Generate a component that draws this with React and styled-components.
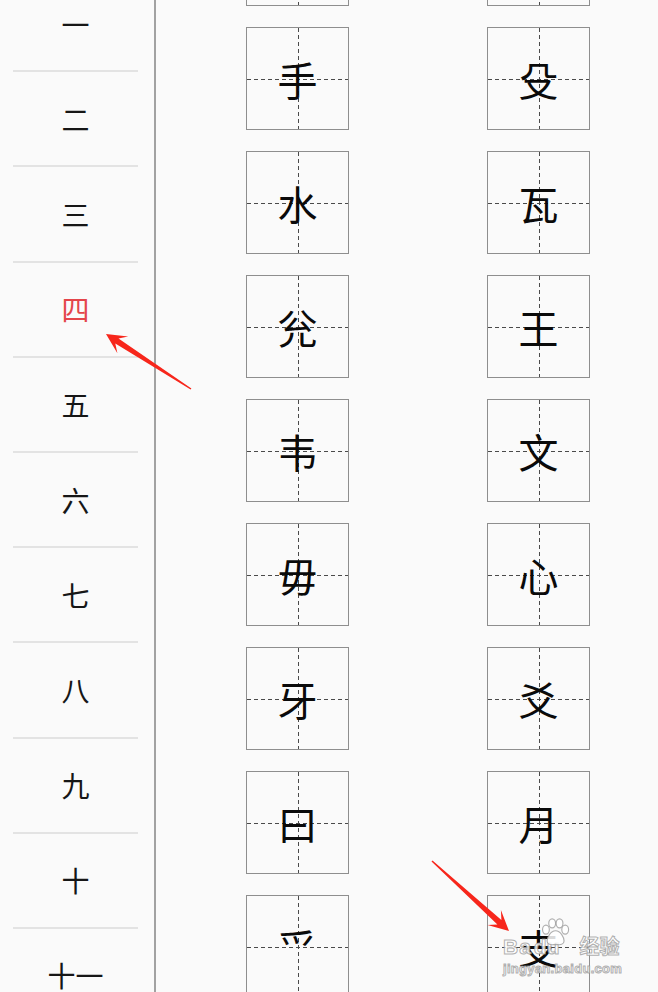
import React from "react";
import styled, { createGlobalStyle } from "styled-components";

const GlobalStyle = createGlobalStyle`
  html, body { margin: 0; padding: 0; background: #fafafa; }
  body { overflow: hidden; font-family: "Noto Sans CJK SC", "Noto Sans", sans-serif; }
`;

const Page = styled.div`
  position: relative;
  display: flex;
  width: 658px;
  height: 992px;
  overflow: hidden;
  background: #fafafa;
`;

const Sidebar = styled.nav`
  flex: 0 0 154px;
  border-right: 2px solid #a2a2a2;
  display: flex;
  flex-direction: column;
`;

const List = styled.ul`
  list-style: none;
  margin: -23px 0 0 0;
  padding: 0;
`;

const Item = styled.li`
  box-sizing: border-box;
  height: 95.2px;
  margin: 0 16px 0 13px;
  border-bottom: 2px solid ${(p) => (p.$last ? "transparent" : "#e3e3e3")};
  display: flex;
  align-items: center;
  justify-content: center;
  font-family: "Noto Sans CJK SC", sans-serif;
  font-size: 28px;
  line-height: 1;
  color: ${(p) => (p.$active ? "#e4454a" : "#161616")};
`;

const Main = styled.main`
  flex: 1;
  display: grid;
  grid-template-columns: 103px 103px;
  grid-auto-rows: 103px;
  column-gap: 138px;
  row-gap: 21px;
  align-content: start;
  padding-left: 90px;
  margin-top: -97px;
`;

const Cell = styled.div`
  position: relative;
  box-sizing: border-box;
  width: 103px;
  height: 103px;
  border: 1px solid #8e8e8e;
  display: flex;
  align-items: center;
  justify-content: center;
  font-family: "Noto Sans CJK SC", sans-serif;
  font-size: 40px;
  line-height: 1;
  color: #0a0a0a;

  &::before {
    content: "";
    position: absolute;
    left: 0;
    right: 0;
    top: 50%;
    height: 1px;
    background: repeating-linear-gradient(to right, #4a4a4a 0 4px, transparent 4px 7px);
  }
  &::after {
    content: "";
    position: absolute;
    top: 0;
    bottom: 0;
    left: 50%;
    width: 1px;
    background: repeating-linear-gradient(to bottom, #4a4a4a 0 4px, transparent 4px 7px);
  }
`;

const Glyph = styled.span`
  position: relative;
  z-index: 1;
`;

const Overlay = styled.svg`
  position: absolute;
  left: 0;
  top: 0;
  width: 658px;
  height: 992px;
  pointer-events: none;
  z-index: 5;
`;

const Watermark = styled.div`
  position: absolute;
  left: 503px;
  top: 936px;
  z-index: 6;
  pointer-events: none;
  display: flex;
  flex-direction: column;
  align-items: flex-start;
  gap: 5px;
`;

const MarkRow = styled.div`
  display: flex;
  align-items: flex-end;
`;

const MarkText = styled.span`
  font-family: "Liberation Sans", "Noto Sans CJK SC", sans-serif;
  font-weight: 700;
  font-size: ${(p) => p.$size}px;
  line-height: 1;
  color: rgba(255, 255, 255, 0.85);
  -webkit-text-stroke: 1px rgba(150, 150, 150, 0.75);
  letter-spacing: ${(p) => p.$spacing || 0}px;
  margin-left: ${(p) => p.$gap || 0}px;
`;

const DuBlock = styled.div`
  position: relative;
  display: flex;
  flex-direction: column;
  align-items: center;
  margin-left: 2px;
`;

const Paw = styled.svg`
  position: absolute;
  left: 4px;
  top: -18px;
`;

const sidebarItems = ["一", "二", "三", "四", "五", "六", "七", "八", "九", "十", "十一"];

const rows = [
  ["牛", "户"],
  ["手", "殳"],
  ["水", "瓦"],
  ["兊", "王"],
  ["韦", "文"],
  ["毋", "心"],
  ["牙", "爻"],
  ["曰", "月"],
  ["爫", "支"],
];

function arrowPoints(tx, ty, px, py) {
  const dx = px - tx;
  const dy = py - ty;
  const L = Math.hypot(dx, dy);
  const ux = dx / L;
  const uy = dy / L;
  const nx = -uy;
  const ny = ux;
  const head = 20;
  const back = 13;
  const barb = 10;
  const shaft = 3;
  const tail = 0.7;
  const pts = [
    [tx + tail * nx, ty + tail * ny],
    [px - back * ux + shaft * nx, py - back * uy + shaft * ny],
    [px - head * ux + barb * nx, py - head * uy + barb * ny],
    [px, py],
    [px - head * ux - barb * nx, py - head * uy - barb * ny],
    [px - back * ux - shaft * nx, py - back * uy - shaft * ny],
    [tx - tail * nx, ty - tail * ny],
  ];
  return pts.map((p) => p.map((v) => v.toFixed(1)).join(",")).join(" ");
}

export default function App() {
  return (
    <>
      <GlobalStyle />
      <Page>
        <Sidebar>
          <List>
            {sidebarItems.map((t, i) => (
              <Item key={t} $active={i === 3} $last={i === sidebarItems.length - 1}>
                {t}
              </Item>
            ))}
          </List>
        </Sidebar>
        <Main>
          {rows.flat().map((c, i) => (
            <Cell key={i}>
              <Glyph>{c}</Glyph>
            </Cell>
          ))}
        </Main>
        <Overlay viewBox="0 0 658 992">
          <polygon points={arrowPoints(191, 389, 106, 334)} fill="#f7261b" />
          <polygon points={arrowPoints(432, 861, 509, 931)} fill="#f7261b" />
        </Overlay>
        <Watermark>
          <MarkRow>
            <MarkText $size={21} $spacing={1}>Ba</MarkText>
            <DuBlock>
              <Paw width="34" height="30" viewBox="0 0 30 26">
                <g fill="rgba(255,255,255,0.85)" stroke="rgba(150,150,150,0.75)" strokeWidth="1">
                  <ellipse cx="7" cy="10" rx="3" ry="4" />
                  <ellipse cx="12.5" cy="4.5" rx="3" ry="4" />
                  <ellipse cx="19" cy="4.5" rx="3" ry="4" />
                  <ellipse cx="24" cy="10" rx="3" ry="4" />
                  <path d="M15.5 11 C11 11 8 17 8 20 C8 23 11 24 15.5 23 C20 24 23 23 23 20 C23 17 20 11 15.5 11 Z" />
                </g>
              </Paw>
              <MarkText $size={21}>du</MarkText>
            </DuBlock>
            <MarkText $size={20} $spacing={0} $gap={20}>经验</MarkText>
          </MarkRow>
          <MarkText $size={13} $spacing={0.3}>jingyan.baidu.com</MarkText>
        </Watermark>
      </Page>
    </>
  );
}
